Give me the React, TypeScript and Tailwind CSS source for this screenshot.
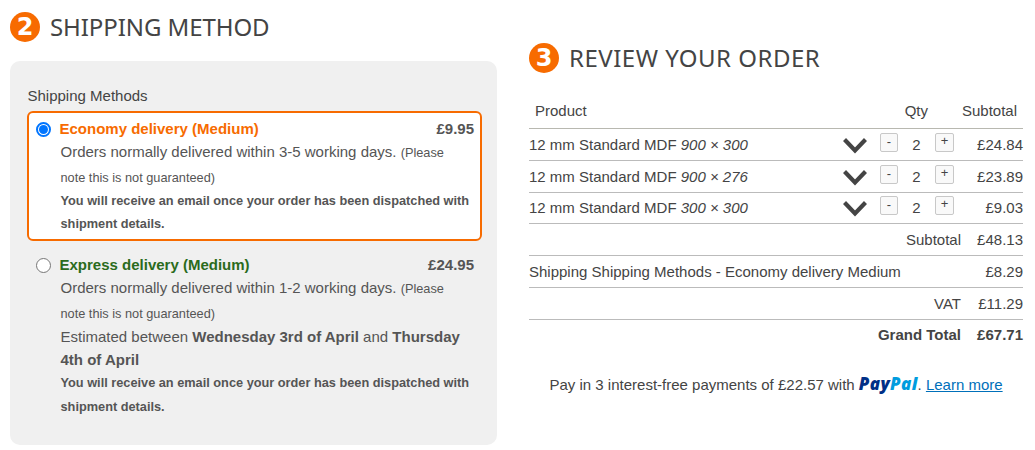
import React from 'react';

interface OrderItem {
  name: string;
  size: string;
  qty: number;
  subtotal: string;
  rowClass?: string;
}

const items: OrderItem[] = [
  { name: '12 mm Standard MDF', size: '900 × 300', qty: 2, subtotal: '£24.84' },
  { name: '12 mm Standard MDF', size: '900 × 276', qty: 2, subtotal: '£23.89' },
  { name: '12 mm Standard MDF', size: '300 × 300', qty: 2, subtotal: '£9.03', rowClass: '-mt-px' }
];

const StepHeading: React.FC<{ step: number; title: string; titleClass: string }> = ({ step, title, titleClass }) => (
  <h2 className="flex h-[30px] items-center gap-[10px] whitespace-nowrap">
    <span className="flex size-[30px] shrink-0 items-center justify-center rounded-full bg-[#f76b00] font-['DejaVu_Sans',sans-serif] text-[24px] leading-[30px] font-bold text-white">
      {step}
    </span>
    <span className={`font-['Noto_Sans',sans-serif] text-[24px] leading-[30px] text-[#444] ${titleClass}`}>{title}</span>
  </h2>
);

interface ShippingOptionProps {
  title: string;
  price: string;
  days: string;
  selected?: boolean;
  estimate?: React.ReactNode;
}

const ShippingOption: React.FC<ShippingOptionProps> = ({ title, price, days, selected = false, estimate }) => (
  <label
    className={`relative flex rounded-md border-2 pt-1 pb-1 pl-[6px] ${
      selected ? 'border-[#f76b00] bg-white' : 'border-transparent'
    }`}
  >
    <span
      className={`mt-[5px] ml-px flex size-[15px] shrink-0 items-center justify-center rounded-full bg-white ${
        selected ? 'border-2 border-[#0075ff]' : 'border border-[#767676]'
      }`}
    >
      {selected && <span className="size-[9px] rounded-full bg-[#0075ff]" />}
    </span>
    <input type="radio" name="shipping" defaultChecked={selected} className="sr-only" />
    <span className="ml-[8.5px] block min-w-0 flex-1 whitespace-nowrap text-[#555]">
      <span className="-mb-px flex justify-between pr-[6px] text-[15px] leading-[23px] font-bold">
        <span className={selected ? 'text-[#f76b00]' : 'text-[#2b6b1c]'}>{title}</span>
        <span>{price}</span>
      </span>
      <span className="ml-px block text-[15px] leading-[25px]">
        Orders normally delivered within {days} working days.{' '}
        <span className="text-[12.75px] leading-none">(Please</span>
        <br />
        <span className="text-[12.75px] leading-none">note this is not guaranteed)</span>
      </span>
      {estimate && <span className="ml-px block text-[15px] leading-[23px]">{estimate}</span>}
      <span className={`ml-px block text-[12.75px] font-bold ${estimate ? 'leading-6' : 'leading-[23px]'}`}>
        You will receive an email once your order has been dispatched with
        <br />
        shipment details.
      </span>
    </span>
  </label>
);

const QtyButton: React.FC<{ label: string; className?: string }> = ({ label, className = '' }) => (
  <button
    className={`mt-1 h-[19px] rounded-[2px] border border-[#c8c8c8] bg-[#f9f9f9] text-[13px] leading-[14px] text-[#444] ${className}`}
  >
    {label}
  </button>
);

const ItemRow: React.FC<{ item: OrderItem }> = ({ item }) => (
  <div className={`flex h-8 items-start border-b border-[#bbb] whitespace-nowrap ${item.rowClass ?? ''}`}>
    <span className="w-[314px] leading-8">
      {item.name} <em>{item.size}</em>
    </span>
    <svg className="mt-[9px] h-4 w-6" viewBox="0 0 24 16" fill="none">
      <path d="M1.5 1.5 L12 12.5 L22.5 1.5" stroke="#444" strokeWidth="4.2" />
    </svg>
    <QtyButton label="-" className="ml-[13px] w-[18px] pb-[2px]" />
    <span className="w-[37px] text-center leading-8">{item.qty}</span>
    <QtyButton label="+" className="w-[19px] pb-[3px]" />
    <span className="flex-1 text-right leading-8">{item.subtotal}</span>
  </div>
);

const TotalRow: React.FC<{ label: string; value: string; last?: boolean }> = ({ label, value, last = false }) => (
  <div
    className={`flex h-8 justify-end whitespace-nowrap ${last ? 'leading-[30px] font-bold' : 'border-b border-[#bbb] leading-8'}`}
  >
    <span>{label}</span>
    <span className="w-[62px] text-right">{value}</span>
  </div>
);

export default function App() {
  return (
    <div className="flex h-[450px] w-[1035px] overflow-hidden bg-white font-['Liberation_Sans',Arial,sans-serif] text-[15px] text-[#444]">
      <section className="ml-[10px] w-[487px] pt-3">
        <StepHeading step={2} title="SHIPPING METHOD" titleClass="tracking-[-0.08px]" />
        <div className="mt-[19px] h-[384px] rounded-[10px] bg-[#f0f0f0] pt-6 pr-[15px] pl-[17px]">
          <h3 className="h-[26px] pl-[0.5px] leading-[22px]">Shipping Methods</h3>
          <div className="flex flex-col gap-[6px]">
            <ShippingOption title="Economy delivery (Medium)" price="£9.95" days="3-5" selected />
            <ShippingOption
              title="Express delivery (Medium)"
              price="£24.95"
              days="1-2"
              estimate={
                <>
                  Estimated between <b>Wednesday 3rd of April</b> and <b>Thursday</b>
                  <br />
                  <b>4th of April</b>
                </>
              }
            />
          </div>
        </div>
      </section>

      <section className="ml-8 w-[494px] pt-[43px]">
        <StepHeading step={3} title="REVIEW YOUR ORDER" titleClass="tracking-[0.5px]" />
        <div className="mt-[23px]">
          <div className="flex h-[33px] border-b border-[#b8b8b0] pr-[6px] pl-[6px] leading-[30px]">
            <span className="flex-1">Product</span>
            <span>Qty</span>
            <span className="w-[89px] text-right">Subtotal</span>
          </div>
          {items.map((item) => (
            <ItemRow key={item.size} item={item} />
          ))}
          <TotalRow label="Subtotal" value="£48.13" />
          <div className="flex h-8 justify-between border-b border-[#bbb] leading-8 whitespace-nowrap">
            <span>Shipping Shipping Methods - Economy delivery Medium</span>
            <span>£8.29</span>
          </div>
          <TotalRow label="VAT" value="£11.29" />
          <TotalRow label="Grand Total" value="£67.71" last />
        </div>
        <p className="mt-[21px] ml-[20.5px] leading-6 whitespace-nowrap">
          Pay in 3 interest-free payments of £22.57 with{' '}
          <span className="font-['Noto_Sans',sans-serif] text-[17px] leading-none font-black tracking-[0.35px] text-[#003087] italic">
            Pay<span className="text-[#009cde]">Pal</span>
          </span>
          .{' '}
          <a href="#" className="text-[#0070ba] underline underline-offset-1">
            Learn more
          </a>
        </p>
      </section>
    </div>
  );
}
